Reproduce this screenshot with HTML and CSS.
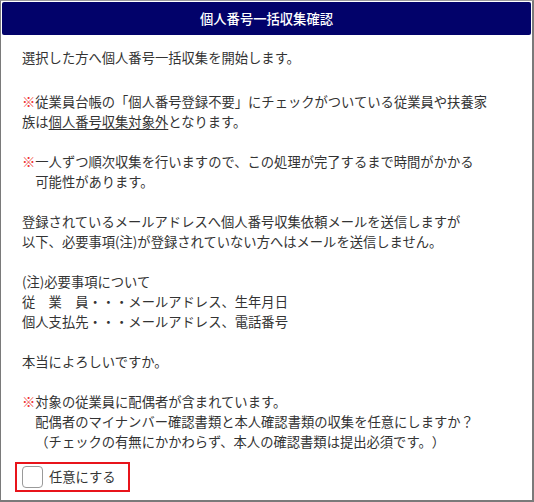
FILE: index.html
```html
<!DOCTYPE html>
<html lang="ja">
<head>
  <meta charset="UTF-8">
  <title>個人番号一括収集確認</title>
  <link rel="stylesheet" href="styles.css">
</head>
<body>

  <div class="dialog">
    <div class="dialog-title">個人番号一括収集確認</div>

    <div class="dialog-body">
      <p class="first">選択した方へ個人番号一括収集を開始します。</p>

      <p><span class="mark">※</span>従業員台帳の「個人番号登録不要」にチェックがついている従業員や扶養家<br>族は<u>個人番号収集対象外</u>となります。</p>

      <p class="hang"><span class="mark">※</span>一人ずつ順次収集を行いますので、この処理が完了するまで時間がかかる<br>可能性があります。</p>

      <p>登録されているメールアドレスへ個人番号収集依頼メールを送信しますが<br>以下、必要事項(注)が登録されていない方へはメールを送信しません。</p>

      <p>(注)必要事項について<br>従　業　員・・・メールアドレス、生年月日<br>個人支払先・・・メールアドレス、電話番号</p>

      <p>本当によろしいですか。</p>

      <p class="hang last"><span class="mark">※</span>対象の従業員に配偶者が含まれています。<br>配偶者のマイナンバー確認書類と本人確認書類の収集を任意にしますか？<br>（チェックの有無にかかわらず、本人の確認書類は提出必須です。）</p>

      <!-- 任意チェック -->
      <label class="option">
        <input type="checkbox" id="optional">
        <span class="check-box"></span>
        <span>任意にする</span>
      </label>
    </div>
  </div>

</body>
</html>
```

FILE: styles.css
```css
body {
  margin: 0;
  padding: 0;
  background: #fff;
  font-family: "Noto Sans CJK JP", "Noto Sans", sans-serif;
  color: #333;
}

.dialog {
  box-sizing: border-box;
  width: 534px;
  height: 502px;
  border: 1px solid #7a7a7a;
  border-right-width: 2px;
  border-bottom-width: 2px;
  border-top-color: #9a9a9a;
  padding: 1px 1px 0 1px;
}

.dialog-title {
  height: 33px;
  line-height: 33px;
  background: #02026a;
  color: #fff;
  text-align: center;
  font-size: 13.3px;
  font-weight: 500;
  border-radius: 2px;
}

.dialog-body {
  padding: 13px 0 0 20px;
  font-size: 13.3px;
  line-height: 20px;
  text-spacing-trim: space-all;
}

.dialog-body p {
  margin: 0 0 20px 0;
  white-space: nowrap;
}

.dialog-body p.first {
  margin-bottom: 24px;
}

.dialog-body p.last {
  margin-bottom: 10px;
}

.hang {
  padding-left: 1em;
  text-indent: -1em;
}

.mark {
  color: #ee3333;
}

u {
  text-underline-offset: 2px;
}

.option {
  display: inline-flex;
  align-items: center;
  gap: 6px;
  margin-left: -7px;
  padding: 2px 12px 2px 5px;
  border: 2px solid #e8141b;
  font-size: 13.3px;
  line-height: 22px;
  cursor: pointer;
}

.option input {
  display: none;
}

.check-box {
  display: inline-block;
  box-sizing: border-box;
  width: 21px;
  height: 22px;
  border: 1px solid #9a9a9a;
  border-radius: 4px;
  background: #fff;
}
```
